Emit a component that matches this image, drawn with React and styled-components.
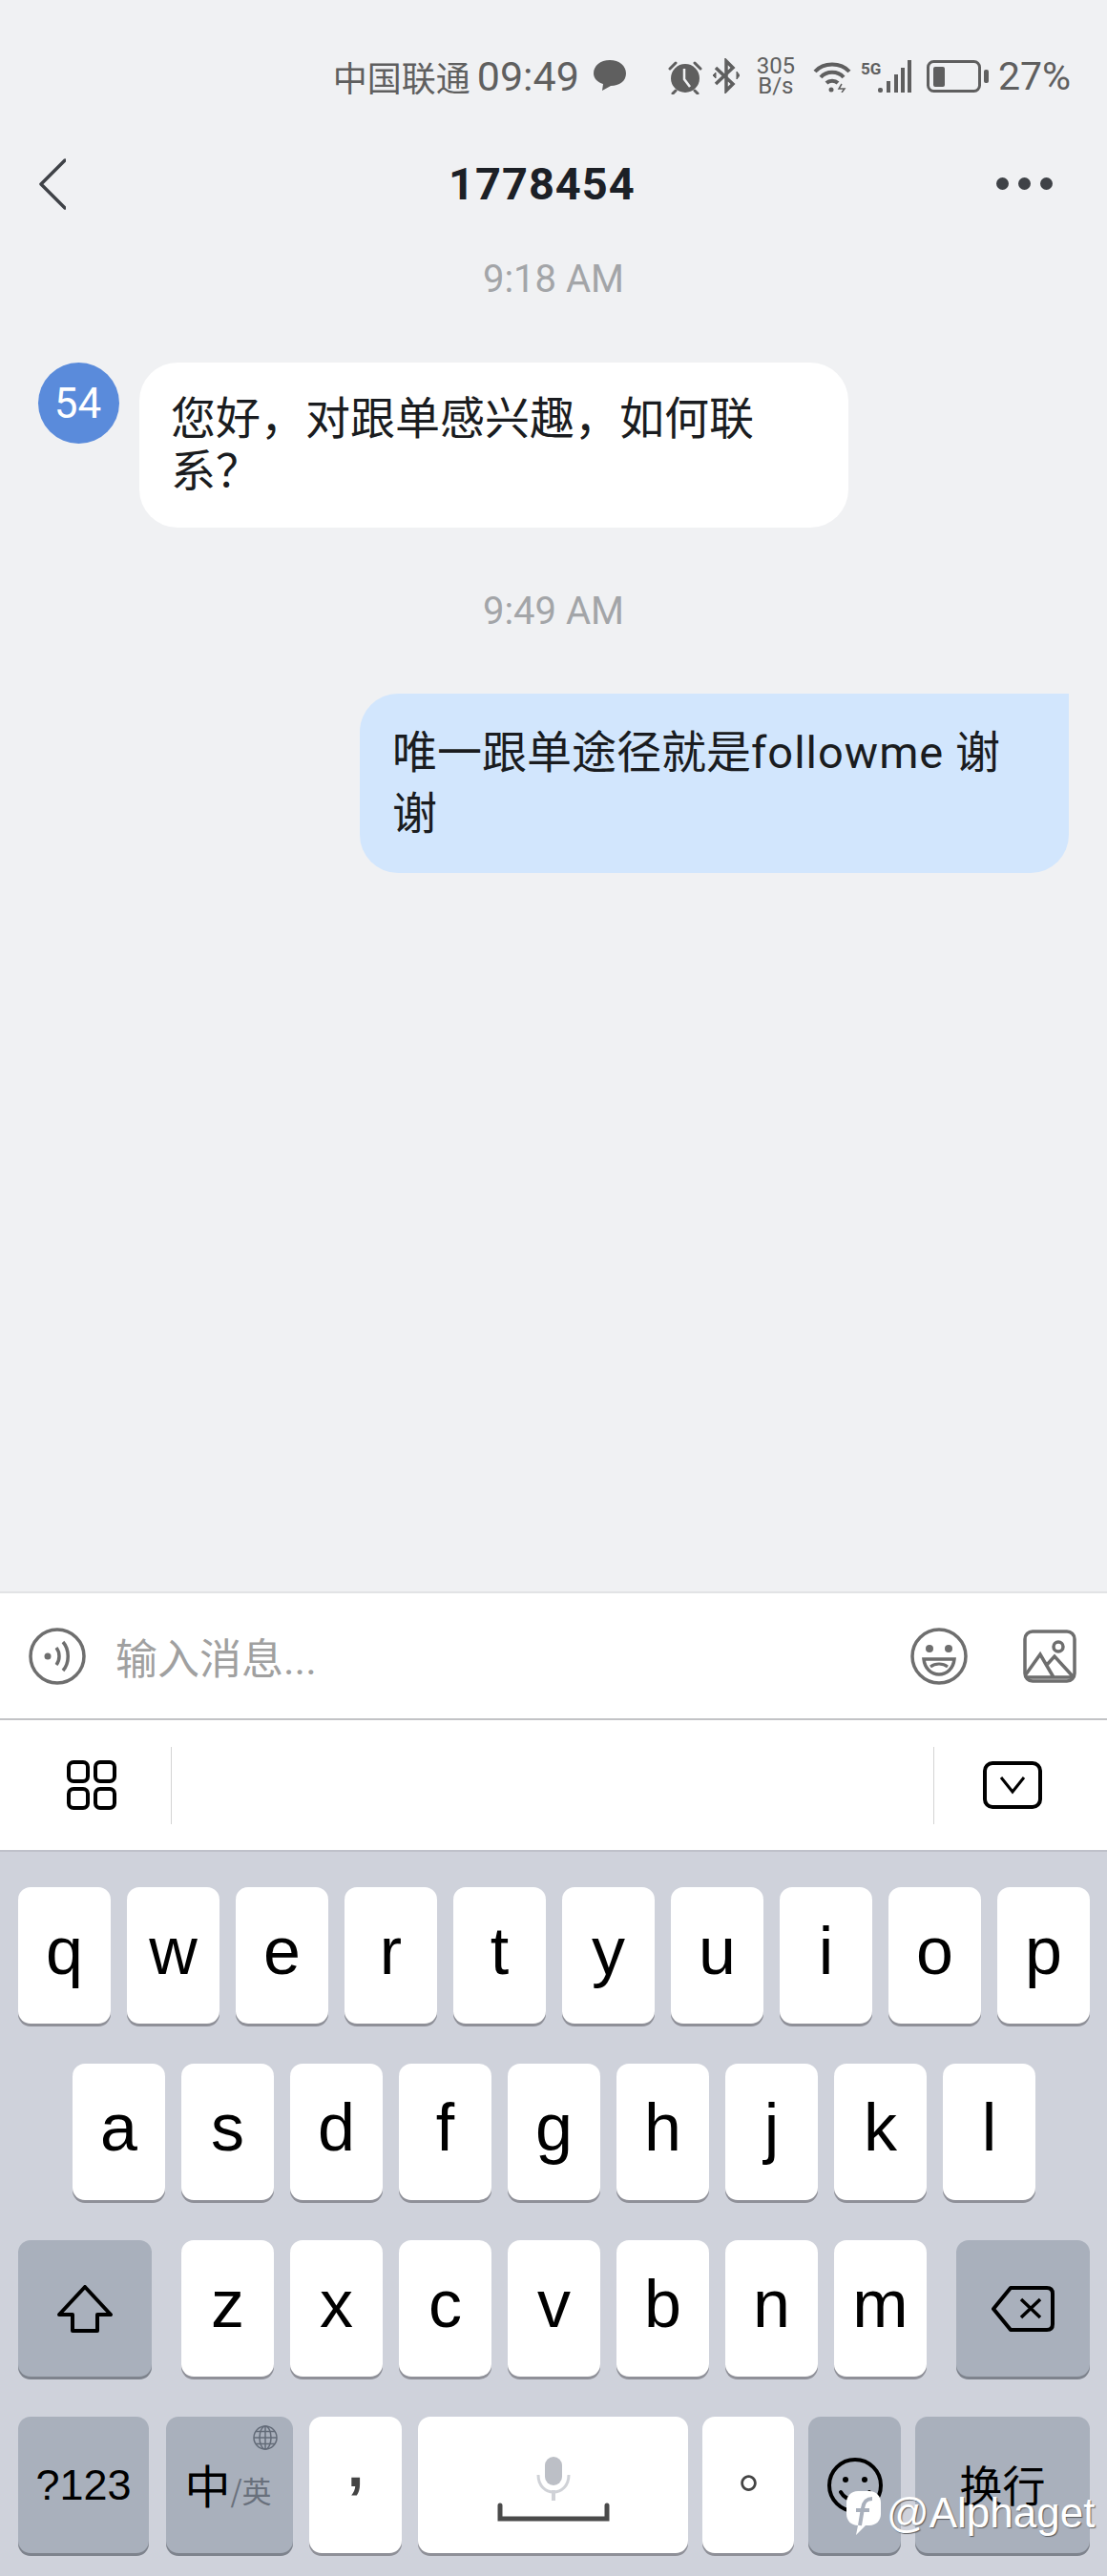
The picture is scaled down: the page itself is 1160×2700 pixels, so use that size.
import React from "react";
import styled, { createGlobalStyle } from "styled-components";

const GlobalStyle = createGlobalStyle`
    * {
        box-sizing: border-box;
    }
    body {
        margin: 0;
        background: #f0f1f3;
        font-family: "Roboto", "Noto Sans CJK SC", sans-serif;
    }
`

const Page = styled.div`
    width: 1160px;
    height: 2700px;
    position: relative;
    overflow: hidden;
    display: flex;
    flex-direction: column;
    background: #f0f1f3;
`

// Status bar
const StatusBar = styled.div`
    height: 150px;
    padding: 59px 38px 0 0;
    display: flex;
    justify-content: flex-end;
    align-items: flex-start;
    color: #5f5f5f;
`
const Carrier = styled.span`
    font-family: "Noto Sans CJK SC", sans-serif;
    font-size: 36px;
    line-height: 42px;
`
const StatusText = styled.span`
    font-size: ${(p) => p.$size}px;
    line-height: 42px;
    margin-left: ${(p) => p.$ml}px;
`
const StatusIcon = styled.svg`
    display: block;
    margin-left: ${(p) => p.$ml}px;
    margin-top: ${(p) => p.$mt || 4}px;
    flex: none;
`
const Speed = styled.div`
    width: 42px;
    margin-left: 17px;
    font-size: 24px;
    line-height: 21px;
    text-align: center;
    white-space: nowrap;
`

// Nav
const NavBar = styled.div`
    height: 100px;
    padding: 16px 57px 0 41px;
    display: flex;
    align-items: flex-start;
`
const Title = styled.h1`
    margin: -1px 0 0 401px;
    font-size: 47px;
    line-height: 56px;
    font-weight: 700;
    letter-spacing: 1px;
    color: #1c2026;
`
const MoreDots = styled.div`
    margin: 20px 0 0 auto;
    display: flex;
    gap: 10px;
    span {
        width: 13px;
        height: 13px;
        border-radius: 50%;
        background: #3f4247;
    }
`

// Messages
const Messages = styled.div`
    flex: 1;
    display: flex;
    flex-direction: column;
`
const TimeStamp = styled.div`
    margin-top: ${(p) => p.$mt}px;
    height: 44px;
    line-height: 44px;
    text-align: center;
    font-size: 40px;
    color: #a3a5a8;
`
const IncomingRow = styled.div`
    margin-top: 65px;
    padding-left: 40px;
    display: flex;
    gap: 21px;
    align-items: flex-start;
`
const Avatar = styled.div`
    width: 85px;
    height: 85px;
    border-radius: 50%;
    background: #5a8bdb;
    color: #fff;
    font-size: 44px;
    padding-right: 2px;
    display: flex;
    align-items: center;
    justify-content: center;
`
const Bubble = styled.div`
    width: 743px;
    height: ${(p) => p.$h}px;
    padding: ${(p) => p.$pad};
    background: ${(p) => p.$bg};
    border-radius: ${(p) => p.$radius};
    font-size: 47px;
    line-height: ${(p) => p.$lh}px;
    color: #1a1c20;
`
const Latin = styled.span`
    letter-spacing: 1px;
`
const OutgoingRow = styled.div`
    margin-top: 64px;
    padding-right: 40px;
    display: flex;
    justify-content: flex-end;
`

// Input
const InputBar = styled.div`
    height: 135px;
    background: #fff;
    border-top: 2px solid #e2e3e5;
    border-bottom: 2px solid #c2c3c6;
    padding: 0 32px 0 30px;
    display: flex;
    align-items: center;
`
const Placeholder = styled.span`
    margin-left: 31px;
    font-size: 44px;
    color: #a0a0a0;
    flex: 1;
`
const ToolBar = styled.div`
    height: 136px;
    background: #fff;
    display: flex;
    align-items: center;
    padding: 0 68px 0 70px;
`
const VLine = styled.div`
    width: 1px;
    height: 81px;
    background: #d4d4d4;
    margin-left: ${(p) => p.$ml}px;
`

// Keyboard
const Keyboard = styled.div`
    height: 761px;
    flex: none;
    background: #cfd2db;
    border-top: 2px solid #bfc1ca;
    padding: 37px 18px 0 19px;
    position: relative;
    display: flex;
    flex-direction: column;
    gap: 42px;
`
const KeyRow = styled.div`
    display: flex;
    gap: 17px;
    justify-content: ${(p) => p.$justify || "flex-start"};
`
const Key = styled.div`
    position: relative;
    flex: none;
    width: ${(p) => p.$w || 97}px;
    height: 143px;
    margin-left: ${(p) => p.$ml || 0}px;
    padding-bottom: ${(p) => (p.$dark ? 0 : 9)}px;
    border-radius: 13px;
    background: ${(p) => (p.$dark ? "#a9b0bc" : "#fff")};
    box-shadow: 0 3px 0 ${(p) => (p.$dark ? "#7e838d" : "#8f9098")};
    color: #000;
    font-family: "Liberation Sans", sans-serif;
    font-size: ${(p) => p.$size || 70}px;
    display: flex;
    align-items: center;
    justify-content: center;
`
const Letters = styled.div`
    display: flex;
    gap: 17px;
`
const Globe = styled.svg`
    position: absolute;
    top: 9px;
    right: 16px;
`
const ImeMain = styled.span`
    font-family: "Noto Sans CJK SC", sans-serif;
    font-size: 48px;
    margin: -4px 0 0 -3px;
`
const ImeSub = styled.span`
    font-family: "Noto Sans CJK SC", sans-serif;
    font-size: 31px;
    color: #69707c;
    margin-top: 10px;
`
const Comma = styled.span`
    font-weight: 700;
    font-size: 62px;
    color: #444;
    transform: translateY(-16px);
`
const Stop = styled.span`
    font-family: "Noto Sans CJK SC", sans-serif;
    font-size: 54px;
    color: #444;
    transform: translate(17px, -16px);
`
const SpaceKeyInner = styled.svg`
    display: block;
    margin-top: 18px;
`
const EnterLabel = styled.span`
    font-family: "Noto Sans CJK SC", sans-serif;
    font-size: 45px;
    margin-top: -2px;
`

// Watermark
const Watermark = styled.div`
    position: absolute;
    left: 887px;
    top: 2607px;
    display: flex;
    align-items: center;
    gap: 6px;
    color: #fff;
    font-size: 44px;
    line-height: 54px;
    font-family: "Liberation Sans", sans-serif;
    text-shadow: 1px 1px 1px rgba(60, 60, 60, 0.75);
`

const Alarm = () => (
    <StatusIcon $ml={44} width="36" height="36" viewBox="0 0 36 36" fill="#5f5f5f">
        <circle cx="18" cy="19" r="15" />
        <path d="M2 9 L8 3 M34 9 L28 3 M8 32 L5 35 M28 32 L31 35" stroke="#5f5f5f" strokeWidth="3" strokeLinecap="round" />
        <path d="M17 9 V20 L23 28" stroke="#f0f1f3" strokeWidth="2.5" fill="none" />
    </StatusIcon>
)

const Bluetooth = () => (
    <StatusIcon $ml={11} $mt={2} width="28" height="37" viewBox="0 0 28 37" fill="none" stroke="#5f5f5f" strokeWidth="3.5">
        <path d="M3 10 L21 27 L14 34 L14 3 L21 10 L3 27" />
        <path d="M25 14 L28 18 L25 22 Z" fill="#5f5f5f" strokeWidth="1" />
        <path d="M3 15 L0 18 L3 21 Z" fill="#5f5f5f" strokeWidth="1" />
    </StatusIcon>
)

const Wifi = () => (
    <StatusIcon $ml={18} width="40" height="34" viewBox="0 0 40 34" fill="none" stroke="#5f5f5f" strokeWidth="4">
        <path d="M2 12 C11 2 29 2 38 12" />
        <path d="M8 18 C14 11 26 11 32 18" />
        <path d="M14 24 C17 21 23 21 26 24" />
        <circle cx="19" cy="31" r="2.5" fill="#5f5f5f" stroke="none" />
        <path d="M30 25 L27 30 H33 L30 34" strokeWidth="1.5" />
    </StatusIcon>
)

const Signal = () => (
    <StatusIcon $ml={10} width="54" height="34" viewBox="0 0 54 34" fill="#5f5f5f">
        <text x="0" y="15" fontSize="17" fontFamily="Roboto" fontWeight="700">5G</text>
        <rect x="18" y="29" width="5" height="5" rx="2" />
        <rect x="27" y="22" width="4" height="12" />
        <rect x="35" y="15" width="4" height="19" />
        <rect x="42" y="8" width="4" height="26" />
        <rect x="49" y="0" width="4" height="34" />
    </StatusIcon>
)

const Battery = () => (
    <StatusIcon $ml={15} width="65" height="34" viewBox="0 0 65 34">
        <rect x="1.5" y="1.5" width="54" height="31" rx="6" fill="none" stroke="#5f5f5f" strokeWidth="3" />
        <rect x="7" y="7" width="12" height="21" rx="2" fill="#5f5f5f" />
        <rect x="60" y="10" width="5" height="14" rx="2" fill="#5f5f5f" />
    </StatusIcon>
)

const keyRow1 = ["q", "w", "e", "r", "t", "y", "u", "i", "o", "p"]
const keyRow2 = ["a", "s", "d", "f", "g", "h", "j", "k", "l"]
const keyRow3 = ["z", "x", "c", "v", "b", "n", "m"]

const App = () => {
    return (
        <Page>
            <GlobalStyle />
            <StatusBar>
                <Carrier>中国联通</Carrier>
                <StatusText $size={43} $ml={7}>09:49</StatusText>
                <StatusIcon $ml={15} $mt={4} width="34" height="32" viewBox="0 0 34 32" fill="#5f5f5f">
                    <path d="M17 0 C27 0 34 6 34 14 C34 22 27 27 18 27 L9 32 L10 25 C4 23 0 19 0 14 C0 6 7 0 17 0 Z" />
                </StatusIcon>
                <Alarm />
                <Bluetooth />
                <Speed>305<br />B/s</Speed>
                <Wifi />
                <Signal />
                <Battery />
                <StatusText $size={41} $ml={10}>27%</StatusText>
            </StatusBar>

            <NavBar>
                <svg width="28" height="54" viewBox="0 0 28 54" fill="none" stroke="#3f4247" strokeWidth="3.5" strokeLinecap="round" strokeLinejoin="round">
                    <path d="M27 2 L2 27 L27 52" />
                </svg>
                <Title>1778454</Title>
                <MoreDots><span /><span /><span /></MoreDots>
            </NavBar>

            <Messages>
                <TimeStamp $mt={21}>9:18 AM</TimeStamp>
                <IncomingRow>
                    <Avatar>54</Avatar>
                    <Bubble $h={173} $pad="31px 70px 0 33px" $bg="#fff" $radius="40px" $lh={55}>
                        您好，对跟单感兴趣，如何联系？
                    </Bubble>
                </IncomingRow>
                <TimeStamp $mt={66}>9:49 AM</TimeStamp>
                <OutgoingRow>
                    <Bubble $h={188} $pad="30px 34px 0 34px" $bg="#d2e6fd" $radius="40px 0 40px 40px" $lh={64}>
                        唯一跟单途径就是<Latin>followme</Latin> 谢谢
                    </Bubble>
                </OutgoingRow>
            </Messages>

            <InputBar>
                <svg width="60" height="60" viewBox="0 0 60 60" fill="none" stroke="#6e6e6e" strokeWidth="3.5">
                    <circle cx="30" cy="30" r="28" />
                    <circle cx="20" cy="30" r="3.5" fill="#6e6e6e" stroke="none" />
                    <path d="M29 21 C33 26 33 34 29 39" />
                    <path d="M36 15 C43 23 43 37 36 45" />
                </svg>
                <Placeholder>输入消息...</Placeholder>
                <svg width="60" height="60" viewBox="0 0 60 60" fill="none" stroke="#6e6e6e" strokeWidth="3.5">
                    <circle cx="30" cy="30" r="28" />
                    <circle cx="20" cy="22" r="4" fill="#6e6e6e" stroke="none" />
                    <circle cx="40" cy="22" r="4" fill="#6e6e6e" stroke="none" />
                    <path d="M14 33 H46 C45 43 38 49 30 49 C22 49 15 43 14 33 Z" />
                    <path d="M21 41 C26 37 34 37 39 41" strokeWidth="3" />
                </svg>
                <svg style={{ marginLeft: 58 }} width="56" height="56" viewBox="0 0 56 56" fill="none" stroke="#6e6e6e" strokeWidth="3.5">
                    <rect x="2" y="2" width="52" height="52" rx="8" />
                    <circle cx="37" cy="18" r="5" />
                    <path d="M3 47 L18 26 L32 50 M24 38 L33 28 L53 50 M4 50 H52" />
                </svg>
            </InputBar>

            <ToolBar>
                <svg width="52" height="52" viewBox="0 0 52 52" fill="none" stroke="#000" strokeWidth="4">
                    <rect x="2" y="2" width="20" height="20" rx="5" />
                    <rect x="30" y="2" width="20" height="20" rx="5" />
                    <rect x="2" y="30" width="20" height="20" rx="5" />
                    <rect x="30" y="30" width="20" height="20" rx="5" />
                </svg>
                <VLine $ml={57} />
                <VLine $ml={798} />
                <svg style={{ marginLeft: 51 }} width="62" height="50" viewBox="0 0 62 50" fill="none" stroke="#000" strokeWidth="4">
                    <rect x="2" y="2" width="58" height="46" rx="8" />
                    <path d="M19 17 L31 32 L43 17" strokeWidth="3" />
                </svg>
            </ToolBar>

            <Keyboard>
                <KeyRow>
                    {keyRow1.map((k) => <Key key={k}>{k}</Key>)}
                </KeyRow>
                <KeyRow $justify="center">
                    {keyRow2.map((k) => <Key key={k}>{k}</Key>)}
                </KeyRow>
                <KeyRow $justify="space-between">
                    <Key $w={140} $dark>
                        <svg width="58" height="50" viewBox="0 0 58 50" fill="none" stroke="#000" strokeWidth="4" strokeLinejoin="round">
                            <path d="M29 2 L56 31 H42 V48 H16 V31 H2 Z" />
                        </svg>
                    </Key>
                    <Letters>
                        {keyRow3.map((k) => <Key key={k}>{k}</Key>)}
                    </Letters>
                    <Key $w={140} $dark>
                        <svg width="66" height="48" viewBox="0 0 66 48" fill="none" stroke="#000" strokeWidth="4" strokeLinejoin="round">
                            <path d="M20 2 H58 C62 2 64 4 64 8 V40 C64 44 62 46 58 46 H20 L2 24 Z" />
                            <path d="M31 14 L51 33 M51 14 L31 33" strokeWidth="3.5" />
                        </svg>
                    </Key>
                </KeyRow>
                <KeyRow>
                    <Key $w={137} $dark $size={45}>?123</Key>
                    <Key $w={133} $dark $ml={1}>
                        <Globe width="26" height="26" viewBox="0 0 26 26" fill="none" stroke="#636b78" strokeWidth="1.5">
                            <circle cx="13" cy="13" r="12" />
                            <ellipse cx="13" cy="13" rx="6" ry="12" />
                            <path d="M13 1 V25 M1 13 H25 M3 6.5 H23 M3 19.5 H23" />
                        </Globe>
                        <ImeMain>中</ImeMain>
                        <ImeSub>/英</ImeSub>
                    </Key>
                    <Key>
                        <Comma>,</Comma>
                    </Key>
                    <Key $w={283}>
                        <SpaceKeyInner width="118" height="70" viewBox="0 0 118 70">
                            <rect x="50" y="1" width="18" height="30" rx="9" fill="#bcbfc6" />
                            <path d="M43 20 C43 44 75 44 75 20" fill="none" stroke="#d0d2d7" strokeWidth="3" />
                            <rect x="57" y="36" width="4" height="11" fill="#d0d2d7" />
                            <path d="M3 52 V66 H115 V52" fill="none" stroke="#4a4a4a" strokeWidth="5" strokeLinecap="round" />
                        </SpaceKeyInner>
                    </Key>
                    <Key $w={96} $ml={-2}>
                        <Stop>。</Stop>
                    </Key>
                    <Key $dark $ml={-2}>
                        <svg width="58" height="58" viewBox="0 0 58 58" fill="none" stroke="#000" strokeWidth="4">
                            <circle cx="29" cy="29" r="27" />
                            <circle cx="19" cy="23" r="3" fill="#000" stroke="none" />
                            <circle cx="39" cy="23" r="3" fill="#000" stroke="none" />
                            <path d="M14 36 C20 47 38 47 44 36" strokeLinecap="round" />
                        </svg>
                    </Key>
                    <Key $w={183} $dark $ml={-2}>
                        <EnterLabel>换行</EnterLabel>
                    </Key>
                </KeyRow>
            </Keyboard>

            <Watermark>
                <svg width="36" height="46" viewBox="0 0 36 46">
                    <path d="M12 0 H24 C31 0 36 5 36 12 V24 C36 31 31 36 24 36 H20 L10 46 L12 36 C5 36 0 31 0 24 V12 C0 5 5 0 12 0 Z" fill="#fff" />
                    <path d="M27 8 C20 8 18 12 17 18 L14 36 M10 20 H24" fill="none" stroke="#a9b0bc" strokeWidth="4" />
                </svg>
                @Alphaget
            </Watermark>
        </Page>
    )
}

export default App;
